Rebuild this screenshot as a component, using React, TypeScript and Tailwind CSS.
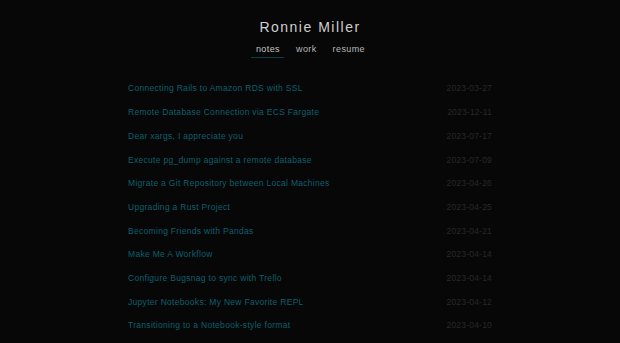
const posts = [
  { title: "Connecting Rails to Amazon RDS with SSL", date: "2023-03-27" },
  { title: "Remote Database Connection via ECS Fargate", date: "2023-12-11" },
  { title: "Dear xargs, I appreciate you", date: "2023-07-17" },
  { title: "Execute pg_dump against a remote database", date: "2023-07-09" },
  { title: "Migrate a Git Repository between Local Machines", date: "2023-04-26" },
  { title: "Upgrading a Rust Project", date: "2023-04-25" },
  { title: "Becoming Friends with Pandas", date: "2023-04-21" },
  { title: "Make Me A Workflow", date: "2023-04-14" },
  { title: "Configure Bugsnag to sync with Trello", date: "2023-04-14" },
  { title: "Jupyter Notebooks: My New Favorite REPL", date: "2023-04-12" },
  { title: "Transitioning to a Notebook-style format", date: "2023-04-10" },
];

const nav = ["notes", "work", "resume"];

export default function App() {
  return (
    <div
      className="min-h-screen bg-[#070707] text-[#c8c8c8]"
      style={{ fontFamily: '"Liberation Sans", Arial, sans-serif' }}
    >
      <header className="flex flex-col items-center pt-[17px]">
        <h1 className="text-[14px] leading-[20px] tracking-[1.5px] text-[#cfcfcf]">Ronnie Miller</h1>
        <nav className="mt-[6px] flex gap-[7px]">
          {nav.map((n, i) => (
            <a
              key={n}
              className={`pl-[5px] pr-[4px] pt-[1px] pb-[2px] text-[9px] leading-[11px] tracking-[0.4px] border-b ${
                i === 0 ? "border-[#0b3e47] text-[#c4c4c4]" : "border-transparent text-[#b8b8b8]"
              }`}
            >
              {n}
            </a>
          ))}
        </nav>
      </header>

      <main className="mx-auto mt-[19px] w-[364px]">
        <ul className="flex flex-col">
          {posts.map((p) => (
            <li key={p.title} className="flex h-[23.7px] items-center justify-between text-[8.5px] tracking-[0.3px]">
              <a className="text-[#0f5f6d]">{p.title}</a>
              <span className="text-[#282828] tracking-[0.2px]">{p.date}</span>
            </li>
          ))}
        </ul>
      </main>
    </div>
  );
}
